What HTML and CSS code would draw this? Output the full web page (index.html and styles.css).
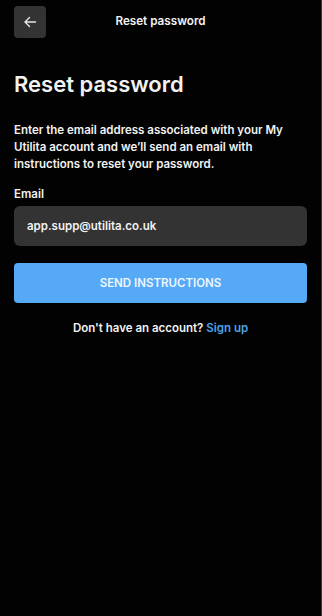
FILE: index.html
```html
<!DOCTYPE html>
<html>
<head>
<meta charset="utf-8">
<link rel="stylesheet" href="styles.css">
</head>
<body>
<div class="screen">
  <header class="topbar">
    <button class="back" aria-label="Back">
      <svg width="14" height="14" viewBox="0 0 14 14"><path d="M12.5 7H2M6.5 2.5L2 7l4.5 4.5" fill="none" stroke="#e6e6e6" stroke-width="1.4" stroke-linecap="round" stroke-linejoin="round"/></svg>
    </button>
    <div class="topbar-title">Reset password</div>
  </header>
  <main class="content">
    <h1 class="heading">Reset password</h1>
    <p class="intro">Enter the email address associated with your My Utilita account and we’ll send an email with instructions to reset your password.</p>
    <label class="label">Email</label>
    <div class="input">app.supp@utilita.co.uk</div>
    <button class="primary">SEND INSTRUCTIONS</button>
    <p class="signup">Don't have an account? <span class="link">Sign up</span></p>
  </main>
</div>
</body>
</html>
```
FILE: styles.css
```css
html, body {
  margin: 0;
  padding: 0;
  background: #000;
}
.screen {
  width: 321px;
  height: 616px;
  background: #020202;
  border-right: 1px solid #3a3a3a;
  font-family: "Inter", "Liberation Sans", sans-serif;
  color: #f2f2f2;
}
.topbar {
  position: relative;
  height: 44px;
  padding: 6px 14px 0;
  box-sizing: border-box;
  display: flex;
}
.back {
  width: 32px;
  height: 32px;
  border: 0;
  border-radius: 4px;
  background: #333333;
  display: flex;
  align-items: center;
  justify-content: center;
  padding: 0;
}
.topbar-title {
  position: absolute;
  left: 0;
  right: 0;
  top: 14px;
  text-align: center;
  font-size: 11.7px;
  font-weight: 600;
  pointer-events: none;
}
.content {
  padding: 26px 14px 0;
  display: flex;
  flex-direction: column;
}
.heading {
  margin: 0;
  font-size: 22px;
  font-weight: 600;
  line-height: 28px;
}
.intro {
  margin: 24px 0 0;
  font-size: 11.5px;
  font-weight: 600;
  line-height: 17px;
}
.label {
  margin-top: 13px;
  font-size: 11.5px;
  font-weight: 600;
  line-height: 16px;
}
.input {
  margin-top: 4px;
  height: 40px;
  border-radius: 6px;
  background: #333333;
  display: flex;
  align-items: center;
  padding: 0 13px;
  font-size: 11.5px;
  font-weight: 600;
}
.primary {
  margin-top: 17px;
  height: 40px;
  border: 0;
  border-radius: 4px;
  background: #56aaf5;
  color: #eef6ff;
  font-family: inherit;
  font-size: 11.5px;
  font-weight: 600;
}
.signup {
  margin: 17px 0 0;
  text-align: center;
  font-size: 11.5px;
  font-weight: 600;
  line-height: 16px;
}
.link {
  color: #4aa3ea;
}
```
